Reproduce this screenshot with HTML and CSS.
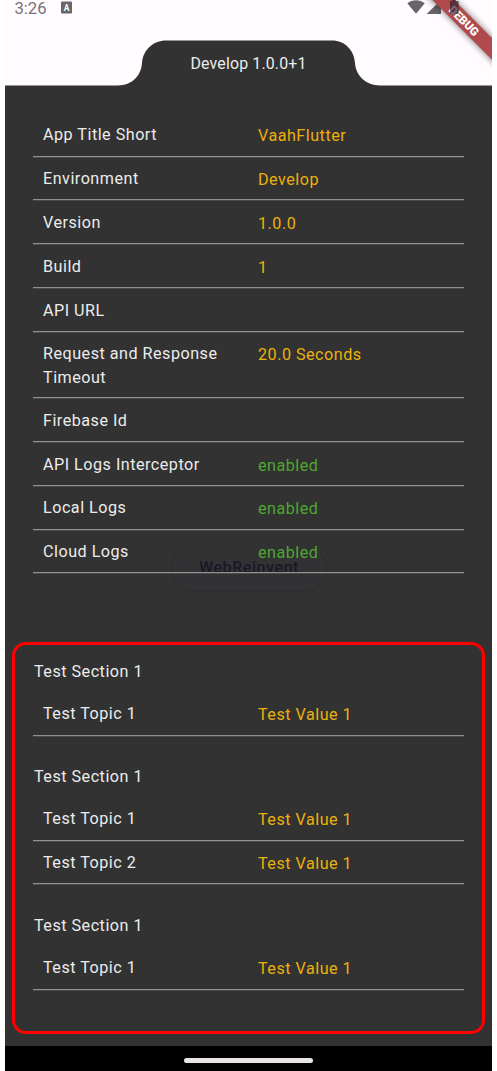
FILE: index.html
```html
<!DOCTYPE html>
<html lang="en">
<head>
<meta charset="utf-8">
<title>Develop 1.0.0+1</title>
<link rel="stylesheet" href="styles.css">
</head>
<body>
<main class="phone">
  <header class="top">
    <svg class="top-art" width="487" height="86" viewBox="5 0 487 86">
      <defs>
        <filter id="shade" x="-20%" y="-150%" width="140%" height="400%"><feGaussianBlur stdDeviation="3.5"/></filter>
      </defs>
      <path fill="#323232" d="M5 85.4H118C132 85.4 141 76 142 63C143 50 153 40.5 166 40.5H332C345 40.5 354 50 355 63C356 76 366 85.4 380 85.4H492V86H5Z"/>
      <rect x="61" y="1.5" width="11" height="12" rx="1" fill="#68656a"/>
      <text class="badge-letter" x="66.5" y="10.5">A</text>
      <path fill="#68656a" d="M407.3 3.2C412-.8 420-.8 424.8 3.2L416 13.8Z"/>
      <path fill="#68656a" d="M426.6 14L441 0V14Z"/>
      <g transform="translate(464.2 21) rotate(45)">
        <rect x="-60" y="-8" width="120" height="16" fill="#000" opacity=".5" filter="url(#shade)"/>
        <rect x="-60" y="-7.7" width="120" height="15.4" fill="#b04a4c"/>
        <text class="banner-text" x="-0.3" y="4.1">DEBUG</text>
      </g>
      <path fill="#302030" fill-opacity=".68" d="M450 1H452V0H456V1H458.6V14H450Z"/>
    </svg>
    <span class="clock">3:26</span>
    <h1 class="title">Develop 1.0.0+1</h1>
  </header>

  <section class="info">
    <div class="ghost">WebReinvent</div>
    <div class="row"><span>App Title Short</span><span class="value">VaahFlutter</span></div>
    <div class="row"><span>Environment</span><span class="value">Develop</span></div>
    <div class="row"><span>Version</span><span class="value">1.0.0</span></div>
    <div class="row"><span>Build</span><span class="value">1</span></div>
    <div class="row"><span>API URL</span><span class="value"></span></div>
    <div class="row tall"><span>Request and Response Timeout</span><span class="value">20.0 Seconds</span></div>
    <div class="row"><span>Firebase Id</span><span class="value"></span></div>
    <div class="row"><span>API Logs Interceptor</span><span class="value on">enabled</span></div>
    <div class="row"><span>Local Logs</span><span class="value on">enabled</span></div>
    <div class="row"><span>Cloud Logs</span><span class="value on">enabled</span></div>
  </section>

  <section class="tests">
    <h2 class="heading">Test Section 1</h2>
    <div class="row"><span>Test Topic 1</span><span class="value">Test Value 1</span></div>
    <h2 class="heading">Test Section 1</h2>
    <div class="row"><span>Test Topic 1</span><span class="value">Test Value 1</span></div>
    <div class="row"><span>Test Topic 2</span><span class="value">Test Value 1</span></div>
    <h2 class="heading">Test Section 1</h2>
    <div class="row"><span>Test Topic 1</span><span class="value">Test Value 1</span></div>
  </section>

  <footer class="nav"><div class="pill"></div></footer>
</main>
</body>
</html>
```
FILE: styles.css
```css
* { box-sizing: border-box; }
body {
  margin: 0;
  background: #fff;
  overflow: hidden;
}
.phone {
  display: flex;
  flex-direction: column;
  width: 487px;
  height: 1071px;
  margin-left: 5px;
  background: #323232;
  color: #ececec;
  font: 400 16.15px/23.8px Roboto, sans-serif;
  letter-spacing: 0.5px;
}
.top {
  position: relative;
  height: 86px;
  flex: none;
  background: #fffbff;
}
.top-art { display: block; }
.clock {
  position: absolute;
  left: 9.5px;
  top: 0;
  color: #767378;
  font-size: 16.6px;
  line-height: 17px;
  letter-spacing: 0;
}
.title {
  position: absolute;
  top: 51.5px;
  left: 0;
  width: 100%;
  margin: 0;
  text-align: center;
  font-size: 15.9px;
  font-weight: 400;
  letter-spacing: 0.15px;
}
.badge-letter {
  fill: #fff;
  font: 700 8.5px Roboto, sans-serif;
  letter-spacing: 0;
  text-anchor: middle;
}
.banner-text {
  fill: #fff;
  font: 900 11.6px Roboto, sans-serif;
  letter-spacing: 0;
  text-anchor: middle;
}
.info {
  position: relative;
  height: 556px;
  flex: none;
  padding: 26.9px 28px 0;
}
.row {
  display: grid;
  grid-template-columns: 215px 1fr;
  height: 43.8px;
  padding: 10.6px 10px 0;
  border-bottom: 1px solid #929292;
  box-shadow: 0 1px #4b4b4b;
}
.row.tall { height: 66.3px; }
.row.tall span:first-child { padding-right: 20px; }
.value {
  padding-top: 1px;
  color: #ecb00c;
}
.value.on { color: #4da831; }
.ghost {
  position: absolute;
  left: 166px;
  top: 459px;
  width: 156px;
  height: 47px;
  border: 1px solid #2d2d2f;
  border-top-color: transparent;
  border-radius: 24px;
  background: linear-gradient(#323232, #323235 40%);
  color: #1b1728;
  font-weight: 500;
  line-height: 44px;
  text-align: center;
}
.ghost ~ .row { position: relative; }
.tests {
  height: 392px;
  flex: none;
  margin: 0 7px;
  padding: 14.8px 18px 0;
  border: 3px solid #f00;
  border-radius: 14px;
}
.heading {
  margin: 0;
  padding: 0 0 8.2px 1px;
  font-size: inherit;
  font-weight: 400;
}
.row + .heading { padding-top: 29.3px; }
.nav {
  display: flex;
  justify-content: center;
  height: 25px;
  margin-top: auto;
  padding-top: 12px;
  background: #000;
}
.pill {
  width: 129px;
  height: 5px;
  border-radius: 3px;
  background: #e8e4e8;
}
```
